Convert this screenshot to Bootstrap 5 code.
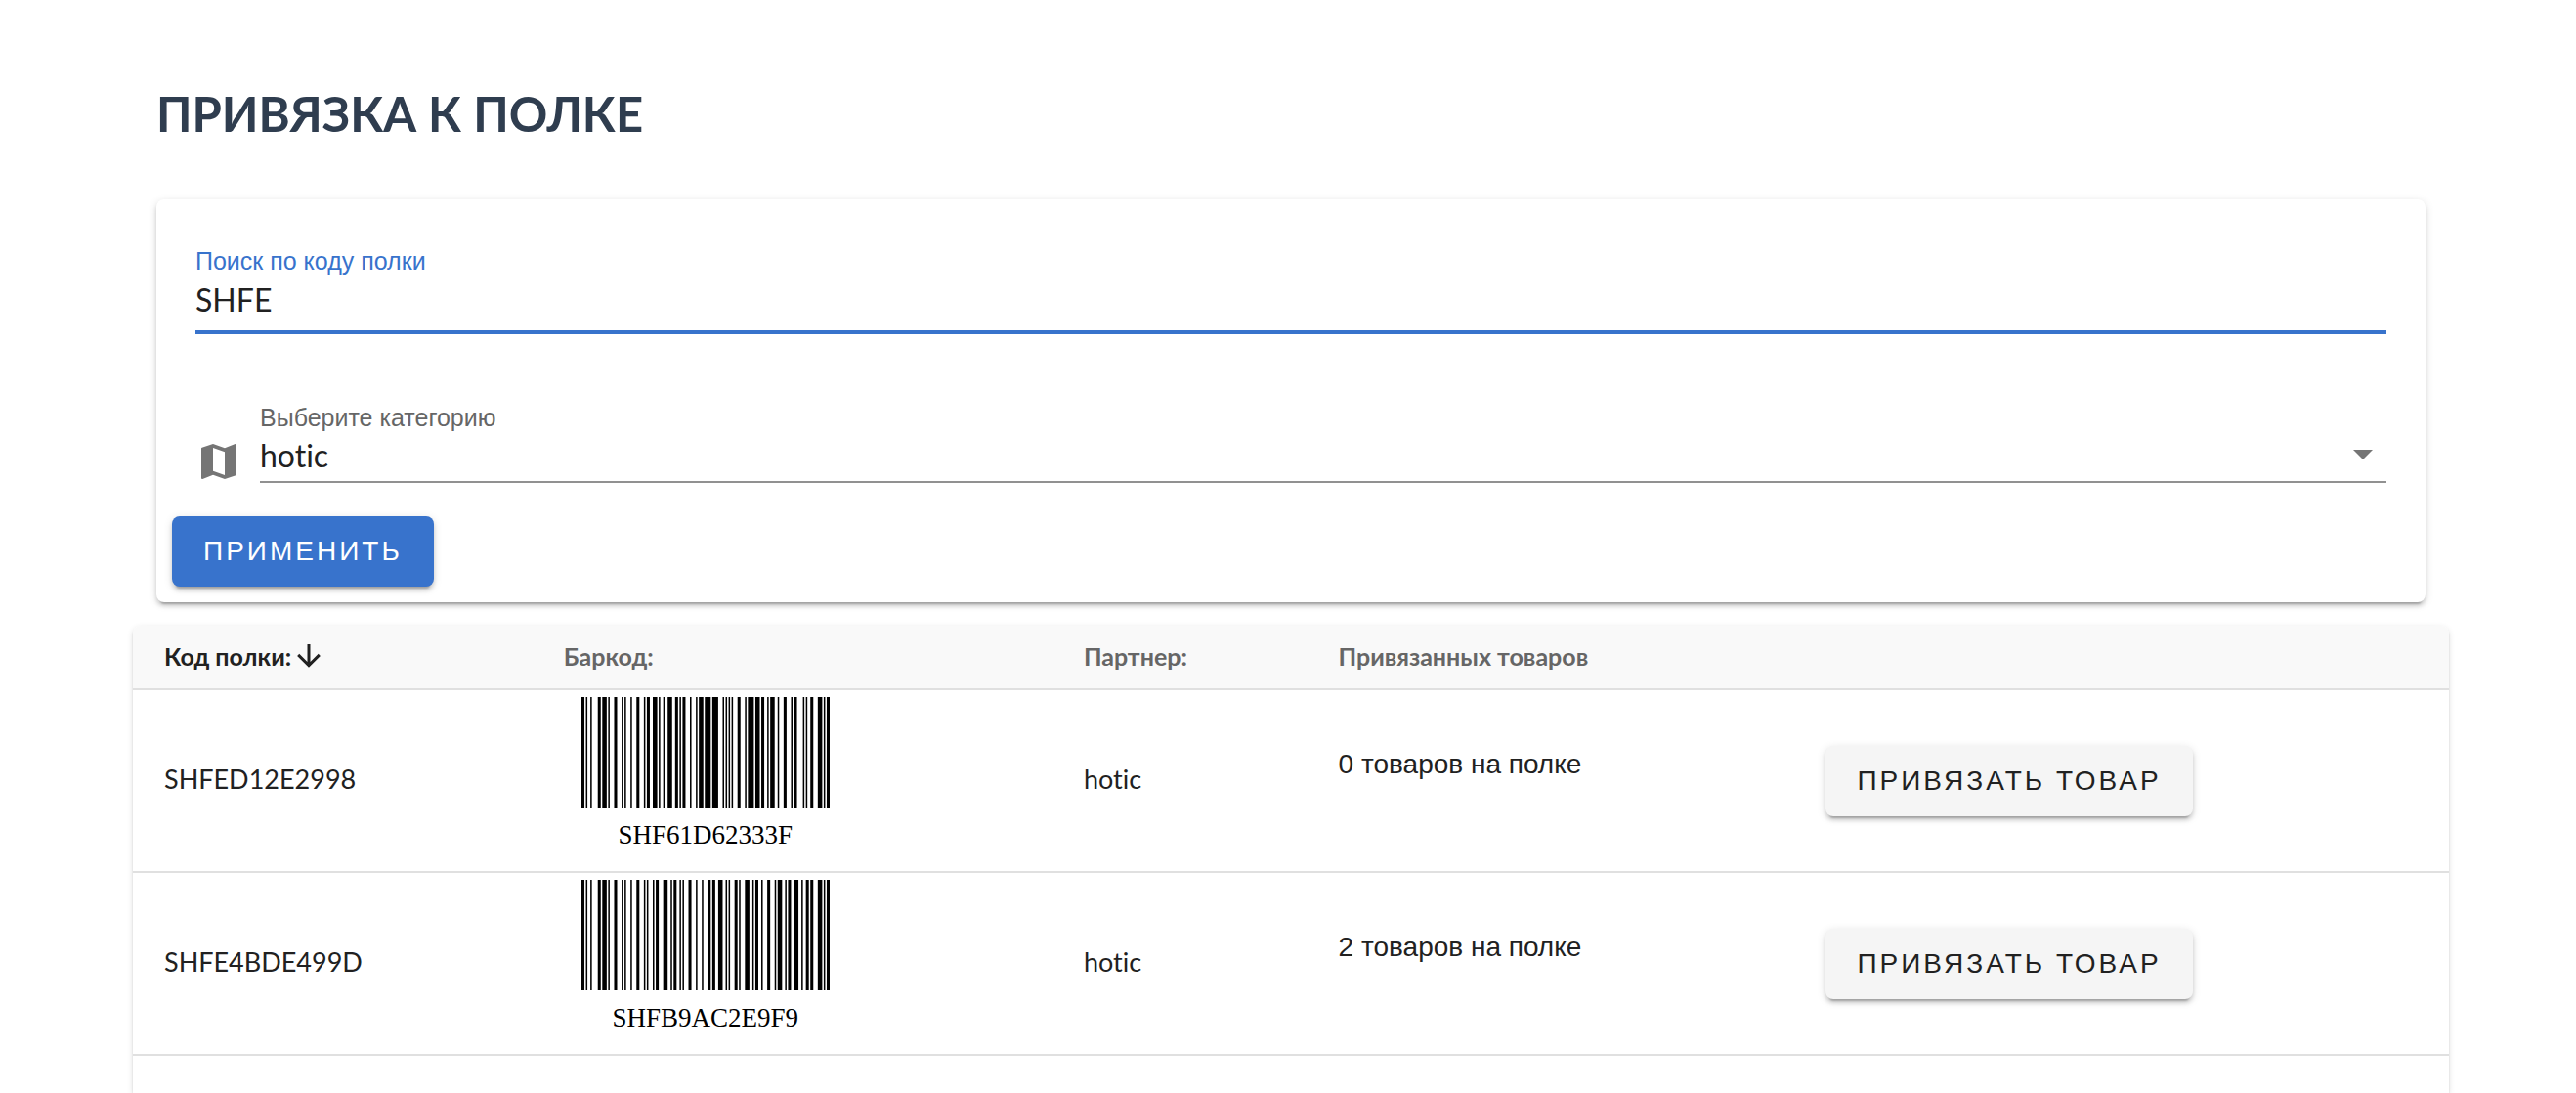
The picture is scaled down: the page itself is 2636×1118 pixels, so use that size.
<!DOCTYPE html>
<html lang="ru">
<head>
<meta charset="utf-8">
<meta name="viewport" content="width=device-width, initial-scale=1">
<title>Привязка к полке</title>
<link href="https://cdn.jsdelivr.net/npm/bootstrap@5.3.0/dist/css/bootstrap.min.css" rel="stylesheet">
<style>
  :root { --ink: #212121; --muted: #666; --brand: #3873cc; --ui: "Liberation Sans", Arial, sans-serif; --brandfont: Lato, sans-serif; }
  body { font-family: var(--brandfont); font-size: 28px; line-height: 40px; color: var(--ink); background: #fff; font-variant-ligatures: none; }
  .page { padding: 86px 130px 0 136px; }
  .inset { margin-left: 24px; margin-right: 24px; }
  .page-title { font-size: 49px; line-height: 60px; font-weight: 700; color: #2f3d4f; margin-bottom: 58px; }
  .filter-card { border: 0; border-radius: 8px; padding: 47px 16px 16px; margin-bottom: 24px; }
  .raised { box-shadow: 0 6px 2px -4px rgba(0,0,0,.2), 0 4px 4px rgba(0,0,0,.14), 0 2px 10px rgba(0,0,0,.12); }
  .fields { padding: 0 24px; margin-bottom: 32px; gap: 69px; }
  .field-label { font-family: var(--ui); font-size: 25px; line-height: 32px; color: var(--muted); display: block; margin-bottom: 1px; }
  .field-label.active { color: var(--brand); }
  .line-input { font-size: 32px; line-height: 40px; font-variant-ligatures: none; color: var(--ink); background: none; border: 0; border-radius: 0; outline: 0; width: 100%; display: block; padding: 2px 0 12px; height: 58px; border-bottom: 4px solid var(--brand); }
  select.line-input { appearance: none; padding-bottom: 6px; height: 50px; border-bottom: 2px solid #919191; }
  .map-icon { margin: 37px 18px 0 0; }
  .caret { bottom: 6px; pointer-events: none; }
  .btn-flat { font-family: var(--ui); font-size: 28px; line-height: 40px; letter-spacing: 3px; text-transform: uppercase; padding: 16px 32px; border: 0; border-radius: 8px; color: var(--ink); background: #f5f5f5; }
  .btn-flat.primary { color: #fff; background: var(--brand); }
  .table-card { border-radius: 8px 8px 0 0; overflow: hidden; }
  .table-shadow { border-radius: 8px 8px 0 0; box-shadow: 0 4px 2px -2px rgba(0,0,0,.2), 0 2px 2px rgba(0,0,0,.14), 0 2px 6px rgba(0,0,0,.12); }
  .shelf-table { table-layout: fixed; border-collapse: separate; border-spacing: 0; color: var(--ink); }
  .shelf-table > :not(caption) > * > * { padding: 0 32px; border-bottom: 2px solid #e0e0e0; vertical-align: middle; color: inherit; }
  .shelf-table > thead > tr > th { font-size: 25px; line-height: 36px; font-weight: 700; color: var(--muted); background: #f9f9f9; padding-top: 13px; padding-bottom: 15px; }
  .shelf-table > thead > tr > th.sorted { color: var(--ink); }
  .shelf-table > tbody > tr > .name-cell { font-size: 27px; padding-bottom: 4px; }
  .c-code { width: 17.25%; } .c-bar { width: 22.45%; } .c-partner { width: 11%; } .c-count { width: 21.05%; }
  .count-text { font-family: var(--ui); margin-bottom: 34px; }
  .barcode { width: 254px; margin: 7px 18px 17px; }
  .barcode svg { display: block; width: 100%; height: 113px; margin-bottom: 8px; }
  .barcode figcaption { font-family: "Liberation Serif", "Times New Roman", serif; font-size: 27px; color: #000; text-align: center; }
</style>
<script src="https://cdn.jsdelivr.net/npm/bootstrap@5.3.0/dist/js/bootstrap.bundle.min.js"></script>
</head>
<body>
<main class="page min-vh-100 d-flex flex-column">
  <h1 class="page-title inset">ПРИВЯЗКА К ПОЛКЕ</h1>

  <form class="card filter-card raised inset">
    <div class="fields d-flex flex-column">
      <div>
        <label class="field-label active" for="shelf">Поиск по коду полки</label>
        <input class="line-input" id="shelf" type="text" value="SHFE">
      </div>
      <div class="d-flex align-items-start">
        <svg class="map-icon flex-shrink-0" width="48" height="48" viewBox="0 0 24 24" fill="#757575" aria-hidden="true"><path d="M15,19L9,16.89V5L15,7.11M20.5,3C20.44,3 20.39,3 20.34,3L15,5.1L9,3L3.36,4.9C3.15,4.97 3,5.15 3,5.38V20.5A0.5,0.5 0 0,0 3.5,21C3.55,21 3.61,21 3.66,20.97L9,18.9L15,21L20.64,19.1C20.85,19 21,18.85 21,18.62V3.5A0.5,0.5 0 0,0 20.5,3Z"/></svg>
        <div class="flex-grow-1 position-relative">
          <label class="field-label" for="category">Выберите категорию</label>
          <select class="line-input" id="category"><option>hotic</option></select>
          <svg class="caret position-absolute end-0" width="48" height="48" viewBox="0 0 24 24" fill="#757575" aria-hidden="true"><path d="M7,10L12,15L17,10H7Z"/></svg>
        </div>
      </div>
    </div>
    <button type="button" class="btn btn-flat primary raised align-self-start">Применить</button>
  </form>

  <div class="table-shadow flex-grow-1">
    <div class="table-card">
      <table class="table shelf-table mb-0">
        <colgroup><col class="c-code"><col class="c-bar"><col class="c-partner"><col class="c-count"><col></colgroup>
        <thead>
          <tr>
            <th scope="col" class="sorted" aria-sort="descending"><span class="d-flex align-items-center">Код полки:<svg width="36" height="36" viewBox="0 0 24 24" fill="currentColor" aria-hidden="true"><path d="M11,4H13V16L18.5,10.5L19.92,11.92L12,19.84L4.08,11.92L5.5,10.5L11,16V4Z"/></svg></span></th>
            <th scope="col">Баркод:</th>
            <th scope="col">Партнер:</th>
            <th scope="col">Привязанных товаров</th>
            <th></th>
          </tr>
        </thead>
        <tbody>
          <tr>
            <td class="name-cell">SHFED12E2998</td>
            <td><figure class="barcode"><svg preserveAspectRatio="none" aria-hidden="true"></svg><figcaption>SHF61D62333F</figcaption></figure></td>
            <td class="name-cell">hotic</td>
            <td><p class="count-text">0 товаров на полке</p></td>
            <td><button type="button" class="btn btn-flat raised">Привязать товар</button></td>
          </tr>
          <tr>
            <td class="name-cell">SHFE4BDE499D</td>
            <td><figure class="barcode"><svg preserveAspectRatio="none" aria-hidden="true"></svg><figcaption>SHFB9AC2E9F9</figcaption></figure></td>
            <td class="name-cell">hotic</td>
            <td><p class="count-text">2 товаров на полке</p></td>
            <td><button type="button" class="btn btn-flat raised">Привязать товар</button></td>
          </tr>
        </tbody>
      </table>
    </div>
  </div>
</main>
<script>
  // Code 128: bar and space widths of each symbol, indexed by symbol value
  const SYMBOLS = ("212222 222122 222221 121223 121322 131222 122213 122312 132212 221213 221312 231212 112232 122132 122231 113222 123122 123221 223211 221132 " +
    "221231 213212 223112 312131 311222 321122 321221 312212 322112 322211 212123 212321 232121 111323 131123 131321 112313 132113 132311 211313 " +
    "231113 231311 112133 112331 132131 113123 113321 133121 313121 211331 231131 213113 213311 213131 311123 311321 331121 312113 312311 332111 " +
    "314111 221411 431111 111224 111422 121124 121421 141122 141221 112214 112412 122114 122411 142112 142211 241211 221114 413111 241112 134111 " +
    "111242 121142 121241 114212 124112 124211 411212 421112 421211 212141 214121 412121 111143 111341 131141 114113 114311 411113 411311 113141 " +
    "114131 311141 411131 211412 211214 211232 2331112").split(" ");
  const CODE_C = 99, CODE_B = 100, START_B = 104, STOP = 106;

  // Set B for text; a run of four or more digits is packed as pairs in set C
  function encode(text) {
    return text.split(/((?:\d\d){2,})/).flatMap((part, i) =>
      i % 2 ? [CODE_C, ...part.match(/\d\d/g).map(Number), CODE_B]
            : [...part].map(c => c.charCodeAt(0) - 32));
  }

  document.querySelectorAll(".barcode").forEach(figure => {
    const values = encode(figure.querySelector("figcaption").textContent);
    const check = values.reduce((sum, v, i) => sum + v * (i + 1), START_B) % 103;
    const widths = [START_B, ...values, check, STOP].map(v => SYMBOLS[v]).join("");
    let x = 0, d = "";
    [...widths].forEach((w, i) => {
      if (i % 2 === 0) d += `M${x} 0h${w}v1h-${w}z`;
      x += +w;
    });
    const svg = figure.querySelector("svg");
    svg.setAttribute("viewBox", `0 0 ${x} 1`);
    svg.innerHTML = `<path d="${d}"/>`;
  });
</script>
</body>
</html>
